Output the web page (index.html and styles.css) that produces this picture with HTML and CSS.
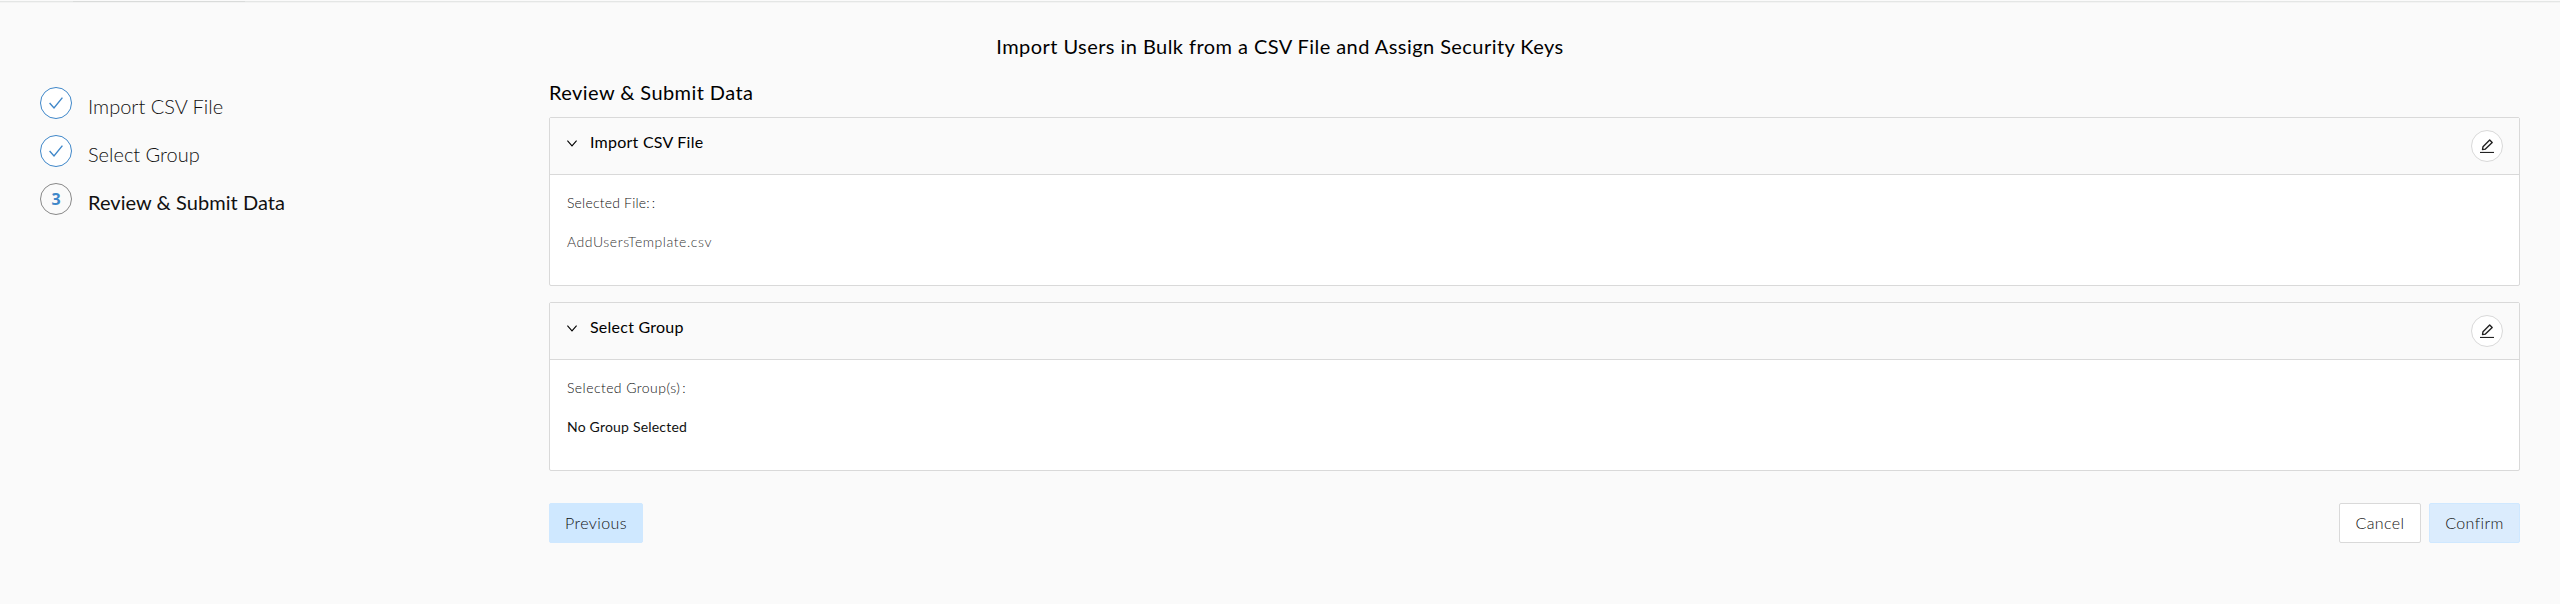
FILE: index.html
```html
<!DOCTYPE html>
<html lang="en">
<head>
<meta charset="utf-8">
<title>Import Users</title>
<link rel="stylesheet" href="styles.css">
</head>
<body>
<svg class="defs" aria-hidden="true">
  <symbol id="check" viewBox="0 0 14 12"><path d="M.6 6 5 10.9 13.4.6" fill="none" stroke="currentColor" stroke-width="1.4"/></symbol>
  <symbol id="chevron" viewBox="0 0 10 7"><path d="M.4.6 5 5.9 9.6.6" fill="none" stroke="currentColor" stroke-width="1.1"/></symbol>
  <symbol id="pencil" viewBox="0 0 14 14"><path d="M0 13.5h14" fill="none" stroke="currentColor" stroke-width="1.2"/><path d="M2.5 10.5 3 7.7 9.7 1 12.2 3.4 5.4 10.1Z" fill="none" stroke="currentColor" stroke-width="1.4" stroke-linejoin="round"/></symbol>
</svg>
<div class="topline"><span class="topline-active"></span></div>
<main class="page">
  <h1 class="title">Import Users in Bulk from a CSV File and Assign Security Keys</h1>
  <div class="layout">
    <ol class="steps">
      <li class="step"><span class="step-mark"><svg class="check"><use href="#check"/></svg></span><span class="step-label">Import CSV File</span></li>
      <li class="step"><span class="step-mark"><svg class="check"><use href="#check"/></svg></span><span class="step-label">Select Group</span></li>
      <li class="step current"><span class="step-mark">3</span><span class="step-label">Review &amp; Submit Data</span></li>
    </ol>
    <section class="content">
      <h2 class="heading">Review &amp; Submit Data</h2>
      <div class="card">
        <div class="card-head"><svg class="chevron"><use href="#chevron"/></svg><h3 class="card-title">Import CSV File</h3><button class="edit" aria-label="Edit"><svg class="pencil"><use href="#pencil"/></svg></button></div>
        <div class="card-body"><p class="label">Selected File:<span class="colon">:</span></p><p class="value file">AddUsersTemplate.csv</p></div>
      </div>
      <div class="card">
        <div class="card-head"><svg class="chevron"><use href="#chevron"/></svg><h3 class="card-title">Select Group</h3><button class="edit" aria-label="Edit"><svg class="pencil"><use href="#pencil"/></svg></button></div>
        <div class="card-body"><p class="label group">Selected Group(s)<span class="colon">:</span></p><p class="value">No Group Selected</p></div>
      </div>
      <div class="actions">
        <button class="btn previous">Previous</button>
        <button class="btn cancel">Cancel</button>
        <button class="btn confirm">Confirm</button>
      </div>
    </section>
  </div>
</main>
</body>
</html>
```
FILE: styles.css
```css
* { box-sizing: border-box; }
body { margin: 0; min-height: 604px; background: #fafafa; color: #000; font-family: Lato, "Open Sans", sans-serif; }
h1, h2, h3, p, ol { margin: 0; padding: 0; }
button { font: inherit; padding: 0; }
.defs { display: none; }
.topline { height: 3px; padding-top: 1px; border-bottom: 1px solid #f3f3f3; background: linear-gradient(#fafafa 1px, #e4e6e5 1px); }
.topline-active { display: block; width: 172px; height: 1px; margin-left: 73px; background: #d9dbda; }
.page { padding: 27px 40px 0; }
.title { height: 32px; line-height: 32px; text-align: center; font-size: 20px; font-weight: 400; letter-spacing: .44px; }
.layout { display: flex; margin-top: 15px; }
.steps { width: 509px; padding-top: 10px; list-style: none; }
.step { display: flex; height: 48px; font-size: 20px; font-weight: 300; color: #111; }
.step-mark { display: flex; align-items: center; justify-content: center; width: 32px; height: 32px; margin-right: 16px; border: 1px solid #3f87c9; border-radius: 50%; background: #fff; color: #3f87c9; }
.step-label { padding-top: 3px; line-height: 32px; }
.current { font-weight: 400; letter-spacing: .05px; }
.current .step-mark { border-color: #888; background: #fafafa; font: 700 16px/32px "Open Sans", sans-serif; letter-spacing: 0; }
.check { width: 14px; height: 12px; }
.content { width: 1971px; }
.heading { height: 32px; margin-bottom: 8px; line-height: 31px; font-size: 20px; font-weight: 400; letter-spacing: .42px; }
.card { height: 169px; margin-bottom: 16px; border: 1px solid #d9d9d9; border-radius: 2px; background: #fff; }
.card-head { display: flex; height: 57px; padding: 12px 16px 12px 17px; border-bottom: 1px solid #d9d9d9; background: #fafafa; }
.chevron { width: 10px; height: 7px; margin: 10px 13px 0 0; }
.card-title { flex: 1; line-height: 24px; font-size: 16px; font-weight: 400; letter-spacing: .24px; }
.edit { display: flex; align-items: center; justify-content: center; width: 32px; height: 32px; border: 1px solid #d9d9d9; border-radius: 50%; background: #fff; color: #222; }
.pencil { width: 14px; height: 14px; }
.card-body { padding: 17px 17px 0; font-size: 14px; }
.label, .value { line-height: 22px; color: #111; letter-spacing: .2px; }
.label { margin-bottom: 17px; font-weight: 300; letter-spacing: .2px; }
.group { letter-spacing: .44px; }
.colon { margin-left: 2px; }
.file { font-weight: 300; color: #333; letter-spacing: .56px; }
.actions { display: flex; gap: 8px; margin-top: 32px; }
.btn { height: 40px; padding-bottom: 2px; border: 1px solid #cfe8ff; border-radius: 2px; background: #cfe8ff; color: #111; font-size: 16px; font-weight: 300; letter-spacing: .4px; }
.previous { width: 94px; margin-right: auto; }
.cancel { width: 82px; border-color: #d9d9d9; background: #fff; }
.confirm { width: 91px; background: #dbecfd; }
```
